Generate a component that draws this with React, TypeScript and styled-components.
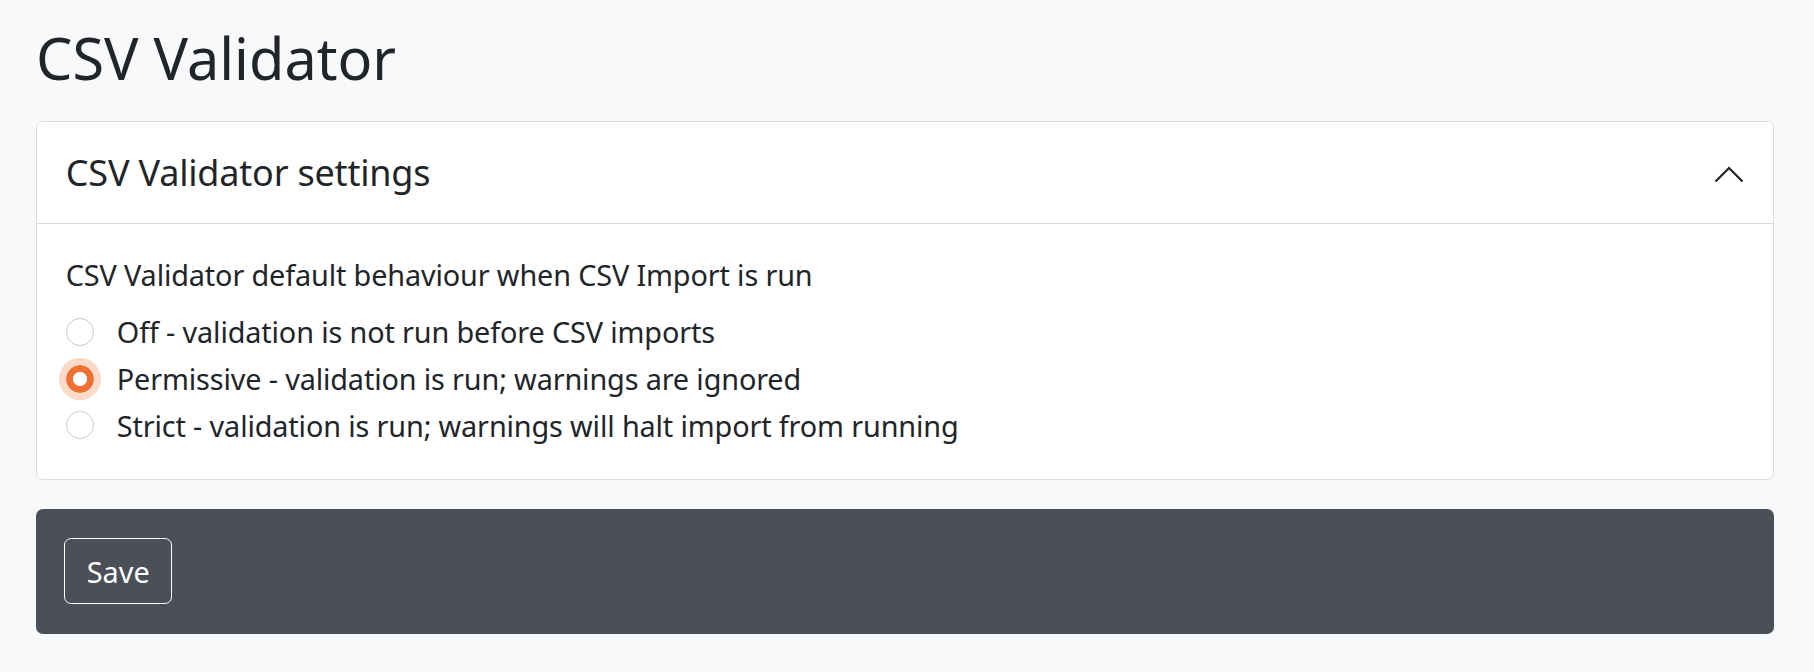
import React, { useState } from "react";
import styled, { createGlobalStyle } from "styled-components";

const GlobalStyle = createGlobalStyle`
  html, body {
    margin: 0;
    padding: 0;
    background: #f8f9fa;
    color: #212529;
    font-family: "Noto Sans", "Open Sans", "Liberation Sans", sans-serif;
    font-size: 28.8px;
    line-height: 1.5;
    letter-spacing: -0.13px;
  }
  * { box-sizing: border-box; }
`;

const Page = styled.main`
  padding: 23px 40px 36px 36px;
`;

const Title = styled.h1`
  margin: 0 0 29px 0;
  font-size: 57.6px;
  font-weight: 400;
  line-height: 1.2;
  letter-spacing: 0;
`;

const Card = styled.section`
  background: #fff;
  border: 1px solid #d9dbde;
  border-radius: 7px;
  overflow: hidden;
`;

const CardHeader = styled.button`
  display: flex;
  align-items: center;
  width: 100%;
  margin: 0;
  padding: 28.8px;
  background: #fff;
  border: none;
  border-bottom: 1px solid #d6d9dd;
  font-family: inherit;
  font-size: 36px;
  line-height: 1.2;
  letter-spacing: -0.2px;
  color: #212529;
  text-align: left;
  cursor: pointer;
`;

const HeaderText = styled.span`
  flex: 1;
`;

const Chevron = styled.svg`
  flex: none;
  width: 30px;
  height: 18px;
  margin-top: 2px;
`;

const CardBody = styled.div`
  padding: 28.8px;
`;

const FieldLabel = styled.div`
  margin-bottom: 14.4px;
`;

const Option = styled.label`
  display: flex;
  align-items: flex-start;
  min-height: 43.2px;
  margin-bottom: 3.6px;
  cursor: pointer;
`;

const RadioCircle = styled.span<{ $checked: boolean }>`
  flex: none;
  width: 28px;
  height: 28px;
  margin-top: 7.6px;
  border-radius: 50%;
  border: 1px solid ${(p) => (p.$checked ? "#ef7030" : "#c5c8cc")};
  background: ${(p) =>
    p.$checked
      ? "radial-gradient(circle, #fff 0 6.8px, #ef7030 7.3px)"
      : "#fff"};
  box-shadow: ${(p) => (p.$checked ? "0 0 0 7px #fbdac8" : "none")};
`;

const OptionText = styled.span`
  margin-left: 23px;
`;

const Footer = styled.div`
  margin-top: 29px;
  background: #4b4f57;
  border-radius: 7px;
  padding: 29px 27px 30px 28px;
`;

const SaveButton = styled.button`
  display: inline-block;
  padding: 10.4px 21.8px;
  background: transparent;
  color: #fff;
  border: 1px solid #fff;
  border-radius: 7px;
  font-family: inherit;
  font-size: 28.8px;
  line-height: 1.5;
  cursor: pointer;
`;

const options = [
  { value: "off", label: "Off - validation is not run before CSV imports" },
  { value: "permissive", label: "Permissive - validation is run; warnings are ignored" },
  { value: "strict", label: "Strict - validation is run; warnings will halt import from running" },
];

export default function App() {
  const [mode, setMode] = useState("permissive");
  return (
    <>
      <GlobalStyle />
      <Page>
        <Title>CSV Validator</Title>
        <Card>
          <CardHeader type="button">
            <HeaderText>CSV Validator settings</HeaderText>
            <Chevron viewBox="0 0 30 18" fill="none">
              <polyline
                points="1.5,16.5 15,3 28.5,16.5"
                stroke="#212529"
                strokeWidth="2.2"
                strokeLinecap="butt"
                strokeLinejoin="miter"
              />
            </Chevron>
          </CardHeader>
          <CardBody>
            <FieldLabel>CSV Validator default behaviour when CSV Import is run</FieldLabel>
            {options.map((o) => (
              <Option key={o.value} onClick={() => setMode(o.value)}>
                <RadioCircle $checked={mode === o.value} />
                <OptionText>{o.label}</OptionText>
              </Option>
            ))}
          </CardBody>
        </Card>
        <Footer>
          <SaveButton type="button">Save</SaveButton>
        </Footer>
      </Page>
    </>
  );
}
